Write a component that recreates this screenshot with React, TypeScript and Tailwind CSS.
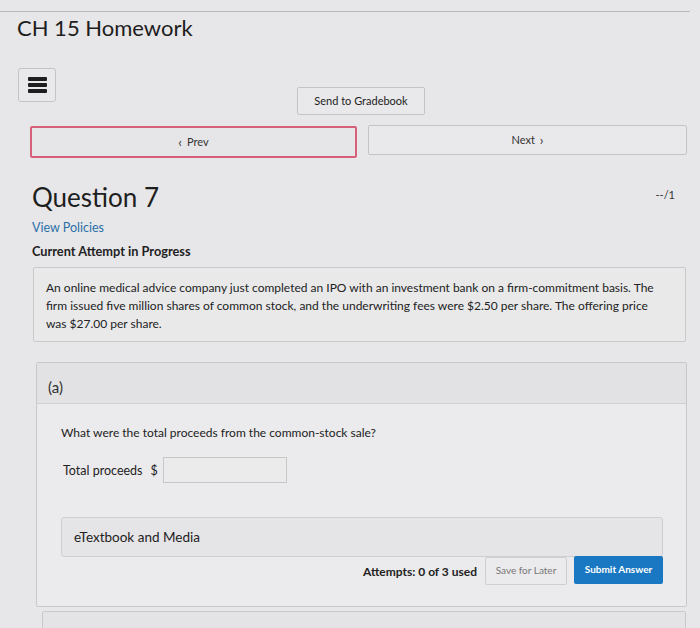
import React from "react";

const font = { fontFamily: "Lato, 'Open Sans', sans-serif" };

export default function App() {
  return (
    <div className="w-[700px] h-[628px] overflow-hidden bg-[#e7e6e8] text-[#222]" style={font}>
      <div className="h-[11px]" />
      <div className="border-t border-[#b9b9bb] mr-[10px]" />
      <h1 className="pl-[17px] pt-[2px] text-[22px] leading-[28px] text-[#1e1e1e]">CH 15 Homework</h1>

      <div className="flex items-start mt-[26px]">
        <button className="ml-[18px] w-[38px] h-[34px] border border-[#c4c4c6] rounded-[3px] flex flex-col items-center justify-center gap-[2px] bg-[#e9e8ea]">
          <span className="block w-[19px] h-[4px] rounded-[1px] bg-[#1e1e1e]" />
          <span className="block w-[19px] h-[4px] rounded-[1px] bg-[#1e1e1e]" />
          <span className="block w-[19px] h-[4px] rounded-[1px] bg-[#1e1e1e]" />
        </button>
        <button className="ml-[241px] mt-[19px] w-[128px] h-[28px] border border-[#c4c4c6] rounded-[2px] text-[11px] text-[#222] bg-[#e9e8ea]">
          Send to Gradebook
        </button>
      </div>

      <div className="flex items-start gap-[11px] mt-[11px] pl-[30px] pr-[13px]">
        <button className="w-[327px] h-[32px] border-2 border-[#d6607a] rounded-[2px] text-[11px] text-[#333] bg-[#e6e5e7] flex items-center justify-center gap-[5px]">
          <span className="text-[13px] leading-none">‹</span>Prev
        </button>
        <button className="flex-1 h-[30px] -mt-[1px] border border-[#c4c4c6] rounded-[2px] text-[11px] text-[#333] bg-[#e9e8ea] flex items-center justify-center gap-[5px]">
          Next<span className="text-[13px] leading-none">›</span>
        </button>
      </div>

      <div className="flex items-start justify-between pl-[32px] pr-[25px] mt-[23px]">
        <h2 className="text-[26px] leading-[32px] text-[#1e1e1e]">Question 7</h2>
        <span className="text-[11px] text-[#333] mt-[6px]">--/1</span>
      </div>
      <div className="pl-[32px] mt-[6px] text-[12.5px] text-[#2a6fa8]">View Policies</div>
      <div className="pl-[32px] mt-[4px] text-[12.75px] font-bold text-[#222]">Current Attempt in Progress</div>

      <div className="ml-[33px] mr-[14px] mt-[6px] border border-[#c9c9cb] rounded-[2px] bg-[#e9e9ea] pl-[12px] pr-[24px] pt-[11px] pb-[8px] text-[12px] leading-[18px] text-[#222]">
        An online medical advice company just completed an IPO with an investment bank on a firm-commitment basis. The firm issued five million shares of common stock, and the underwriting fees were $2.50 per share. The offering price was $27.00 per share.
      </div>

      <div className="ml-[36px] mr-[13px] mt-[20px] border border-[#c9c9cb] rounded-[2px] bg-[#ebeaec] h-[245px]">
        <div className="h-[41px] bg-[#e2e1e3] border-b border-[#d1d1d3] pl-[11px] pt-[15px] text-[15px] leading-[18px] text-[#333]">(a)</div>
        <div className="pl-[24px] pr-[23px]">
          <div className="mt-[20px] text-[12px] leading-[17px] text-[#222]">What were the total proceeds from the common-stock sale?</div>
          <div className="flex items-center mt-[16px] pl-[2px]">
            <span className="text-[12.5px] text-[#222] mt-[2px]">Total proceeds</span>
            <span className="ml-[8px] text-[12.5px] text-[#222] mt-[2px]">$</span>
            <div className="ml-[5px] w-[124px] h-[26px] border border-[#c7c7c9] bg-[#ebebec]" />
          </div>
          <div className="mt-[34px] h-[40px] border border-[#cfcfd1] rounded-[3px] bg-[#e5e4e6] flex items-center pl-[12px] text-[13.5px] text-[#222]">
            eTextbook and Media
          </div>
          <div className="flex items-center justify-end -mt-[2px] h-[30px]">
            <span className="text-[12px] font-bold text-[#222] mr-[8px] mt-[4px]">Attempts: 0 of 3 used</span>
            <button className="w-[82px] h-[28px] mt-[2px] border border-[#cfcfd1] rounded-[2px] text-[10px] text-[#777] bg-[#ebeaec]">Save for Later</button>
            <button className="ml-[7px] w-[89px] h-[28px] rounded-[2px] text-[10px] font-bold text-white bg-[#1a78c2]">Submit Answer</button>
          </div>
        </div>
      </div>

      <div className="ml-[42px] mr-[14px] mt-[4px] h-[24px] border border-[#c9c9cb] rounded-[2px] bg-[#e4e3e5]" />
    </div>
  );
}
